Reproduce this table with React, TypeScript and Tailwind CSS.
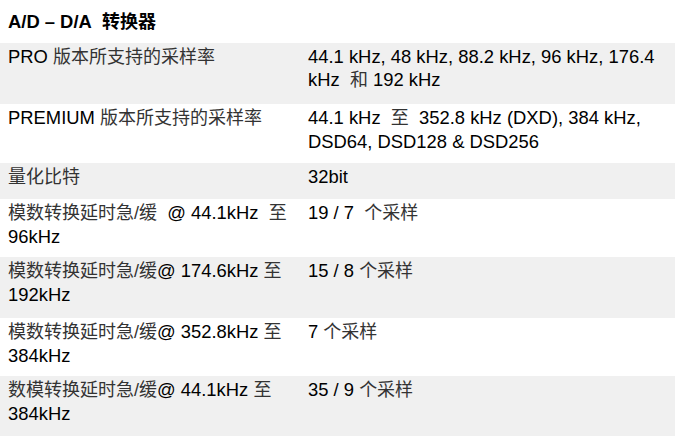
import React from 'react';

type Part = string | { cjk: string };

// Each row: label, value, measured row height, gray background
const ROWS: { label: Part[]; value: Part[]; h: string; gray: boolean }[] = [
  {
    label: ['PRO ', { cjk: '版本所支持的采样率' }],
    value: ['44.1 kHz, 48 kHz, 88.2 kHz, 96 kHz, 176.4 kHz\u00a0 ', { cjk: '和' }, ' 192 kHz'],
    h: 'h-[61px]',
    gray: true,
  },
  {
    label: ['PREMIUM ', { cjk: '版本所支持的采样率' }],
    value: ['44.1 kHz\u00a0 ', { cjk: '至' }, '\u00a0 352.8 kHz (DXD), 384 kHz, DSD64, DSD128 & DSD256'],
    h: 'h-[59px]',
    gray: false,
  },
  {
    label: [{ cjk: '量化比特' }],
    value: ['32bit'],
    h: 'h-[36px]',
    gray: true,
  },
  {
    label: [{ cjk: '模数转换延时急/缓' }, '\u00a0 @ 44.1kHz\u00a0 ', { cjk: '至' }, ' 96kHz'],
    value: ['19 / 7\u00a0 ', { cjk: '个采样' }],
    h: 'h-[58px]',
    gray: false,
  },
  {
    label: [{ cjk: '模数转换延时急/缓' }, '@ 174.6kHz ', { cjk: '至' }, ' 192kHz'],
    value: ['15 / 8 ', { cjk: '个采样' }],
    h: 'h-[61px]',
    gray: true,
  },
  {
    label: [{ cjk: '模数转换延时急/缓' }, '@ 352.8kHz ', { cjk: '至' }, ' 384kHz'],
    value: ['7 ', { cjk: '个采样' }],
    h: 'h-[58px]',
    gray: false,
  },
  {
    label: [{ cjk: '数模转换延时急/缓' }, '@ 44.1kHz ', { cjk: '至' }, ' 384kHz'],
    value: ['35 / 9 ', { cjk: '个采样' }],
    h: 'h-[60px]',
    gray: true,
  },
];

const Text: React.FC<{ parts: Part[] }> = ({ parts }) => (
  <>
    {parts.map((p, i) =>
      typeof p === 'string' ? (
        <React.Fragment key={i}>{p}</React.Fragment>
      ) : (
        <span key={i} className="text-[#333] text-[18px]">
          {p.cjk}
        </span>
      )
    )}
  </>
);

const App: React.FC = () => {
  return (
    <div
      className="w-[675px] h-[436px] overflow-hidden bg-white text-black text-[18.4px] leading-[23px]"
      style={{ fontFamily: '"Liberation Sans", "Noto Sans CJK SC", sans-serif' }}
    >
      <div className="h-[43px] pt-[10px] pl-[8px] font-bold">
        A/D – D/A&nbsp; <span className="text-[18px]">转换器</span>
      </div>
      {ROWS.map((r, i) => (
        <div key={i} className={`flex ${r.h} ${r.gray ? 'bg-[#f0f0f0]' : 'bg-white'}`}>
          <div className="w-[300px] shrink-0 pl-[8px] pt-[2px]">
            <Text parts={r.label} />
          </div>
          <div className="flex-1 pl-[8px] pr-[8px] pt-[2px]">
            <Text parts={r.value} />
          </div>
        </div>
      ))}
    </div>
  );
};

export default App;
